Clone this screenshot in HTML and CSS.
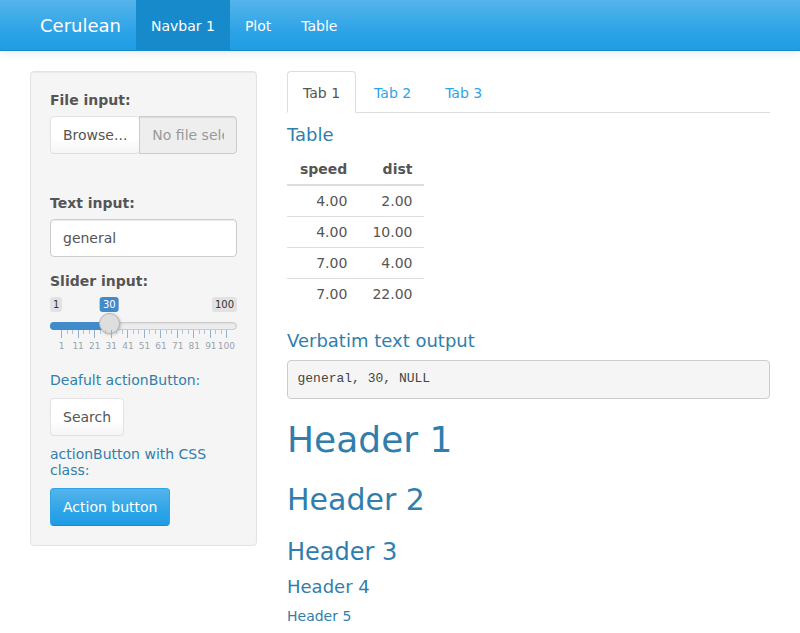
FILE: index.html
```html
<!DOCTYPE html>
<html>
<head>
<meta charset="utf-8">
<title>Cerulean</title>
<link rel="stylesheet" href="styles.css">
</head>
<body>
<nav class="navbar">
  <span class="brand">Cerulean</span>
  <ul class="navlinks">
    <li class="active"><a>Navbar 1</a></li>
    <li><a>Plot</a></li>
    <li><a>Table</a></li>
  </ul>
</nav>
<div class="page">
  <aside class="well">
    <div class="form-group file-group">
      <label class="control-label">File input:</label>
      <div class="input-group">
        <span class="btn btn-default btn-file">Browse...</span>
        <input class="form-control file-name" type="text" placeholder="No file selected" readonly>
      </div>
      <div class="progress-spacer"></div>
    </div>
    <div class="form-group">
      <label class="control-label">Text input:</label>
      <input class="form-control" type="text" value="general">
    </div>
    <div class="form-group">
      <label class="control-label">Slider input:</label>
      <div class="irs">
        <span class="irs-min">1</span>
        <span class="irs-max">100</span>
        <span class="irs-single">30</span>
        <span class="irs-line"></span>
        <span class="irs-bar"></span>
        <span class="irs-handle"></span>
        <div class="irs-grid">
          <div class="ticks">
            <i class="big"></i><i></i><i></i><i class="big"></i><i></i><i></i><i class="big"></i><i></i><i></i><i class="big"></i><i></i><i></i><i class="big"></i><i></i><i></i><i class="big"></i><i></i><i></i><i class="big"></i><i></i><i></i><i class="big"></i><i></i><i></i><i class="big"></i><i></i><i></i><i class="big"></i><i></i><i></i><i class="big"></i>
          </div>
          <div class="grid-labels">
            <span>1</span><span>11</span><span>21</span><span>31</span><span>41</span><span>51</span><span>61</span><span>71</span><span>81</span><span>91</span><span>100</span>
          </div>
        </div>
      </div>
    </div>
    <h5>Deafult actionButton:</h5>
    <button class="btn btn-default">Search</button>
    <h5>actionButton with CSS class:</h5>
    <button class="btn btn-primary">Action button</button>
  </aside>
  <main class="main">
    <ul class="nav-tabs">
      <li class="active"><a>Tab 1</a></li>
      <li><a>Tab 2</a></li>
      <li><a>Tab 3</a></li>
    </ul>
    <h4>Table</h4>
    <table class="shiny-table">
      <thead>
        <tr><th>speed</th><th>dist</th></tr>
      </thead>
      <tbody>
        <tr><td>4.00</td><td>2.00</td></tr>
        <tr><td>4.00</td><td>10.00</td></tr>
        <tr><td>7.00</td><td>4.00</td></tr>
        <tr><td>7.00</td><td>22.00</td></tr>
      </tbody>
    </table>
    <h4>Verbatim text output</h4>
    <pre>general, 30, NULL</pre>
    <h1>Header 1</h1>
    <h2>Header 2</h2>
    <h3>Header 3</h3>
    <h4>Header 4</h4>
    <h5 class="main-h5">Header 5</h5>
  </main>
</div>
</body>
</html>
```
FILE: styles.css
```css
* { box-sizing: border-box; }

body {
  margin: 0;
  font-family: "DejaVu Sans", sans-serif;
  font-size: 14px;
  line-height: 1.428571;
  color: #555;
  background: #fff;
}

/* Navbar */
.navbar {
  display: flex;
  height: 51px;
  padding-left: 25px;
  background-image: linear-gradient(#54b4eb, #2fa4e7 60%, #1d9ce5);
  border-bottom: 1px solid #178acc;
  box-shadow: 0 1px 10px rgba(0, 0, 0, 0.1);
  margin-bottom: 20px;
}
.brand {
  font-size: 18px;
  line-height: 20px;
  padding: 16px 15px 14px;
  color: #fff;
}
.navlinks {
  display: flex;
  list-style: none;
  margin: 0;
  padding: 0;
}
.navlinks a {
  display: block;
  height: 50px;
  padding: 16px 15px 14px;
  line-height: 20px;
  color: #fff;
}
.navlinks .active a {
  background: #178acc;
}

/* Page layout */
.page {
  display: flex;
  align-items: flex-start;
  gap: 30px;
  padding: 0 30px;
}
.well {
  width: 227px;
  flex: none;
  padding: 19px;
  background: #f5f5f5;
  border: 1px solid #e3e3e3;
  border-radius: 4px;
  box-shadow: inset 0 1px 1px rgba(0, 0, 0, 0.05);
}
.main {
  flex: 1;
  min-width: 0;
}

/* Forms */
.form-group { margin-bottom: 15px; }
.control-label {
  display: block;
  font-weight: bold;
  margin-bottom: 5px;
  padding-top: 1px;
  margin-top: -1px;
}
.form-control {
  display: block;
  width: 100%;
  height: 38px;
  padding: 8px 12px;
  font-family: inherit;
  font-size: 14px;
  line-height: 20px;
  color: #555;
  background: #fff;
  border: 1px solid #ccc;
  border-radius: 4px;
  box-shadow: inset 0 1px 1px rgba(0, 0, 0, 0.075);
  outline: none;
}
.input-group { display: flex; }
.btn-file {
  border-radius: 4px 0 0 4px;
  flex: none;
}
.file-name {
  flex: 1;
  min-width: 0;
  background: #eee;
  border-radius: 0 4px 4px 0;
  margin-left: -1px;
}
.file-name::placeholder { color: #999; }
.progress-spacer { height: 25px; }

.btn {
  display: inline-block;
  height: 38px;
  padding: 8px 12px;
  font-family: inherit;
  font-size: 14px;
  line-height: 20px;
  border-radius: 4px;
  border: 1px solid rgba(0, 0, 0, 0.1);
  cursor: pointer;
}
.btn-default {
  color: #555;
  background-image: linear-gradient(#fff, #fff 60%, #f5f5f5);
  border-color: #e3e3e3;
  border-bottom-color: #e0e0e0;
}
.btn-primary {
  color: #fff;
  background-image: linear-gradient(#54b4eb, #2fa4e7 60%, #1d9ce5);
  border-color: #2fa4e7;
  border-bottom-color: #178acc;
}

/* Slider */
.irs {
  position: relative;
  height: 60px;
}
.irs-min, .irs-max, .irs-single {
  position: absolute;
  top: 0;
  font-size: 10px;
  line-height: 1.333;
  padding: 1px 3px;
  border-radius: 3px;
  color: #333;
  background: #e2e2e2;
}
.irs-min { left: 0; }
.irs-max { right: 0; }
.irs-single {
  left: 59.3px;
  transform: translateX(-50%);
  background: #428bca;
  color: #fff;
}
.irs-line {
  position: absolute;
  left: 0;
  right: 0;
  top: 25px;
  height: 8px;
  background: #ededed;
  border: 1px solid #ccc;
  border-radius: 8px;
  box-shadow: inset 0 1px 2px rgba(0, 0, 0, 0.08);
}
.irs-bar {
  position: absolute;
  left: 0;
  top: 25px;
  width: 60px;
  height: 8px;
  background: #428bca;
  border-radius: 8px 0 0 8px;
}
.irs-handle {
  position: absolute;
  left: 49px;
  top: 16px;
  width: 21px;
  height: 21px;
  border-radius: 50%;
  background: #dedede;
  border: 1px solid #b4b4b4;
  box-shadow: 1px 1px 3px rgba(0, 0, 0, 0.2);
}
.irs-grid {
  position: absolute;
  left: 11px;
  top: 33px;
  width: 166px;
  height: 27px;
}
.ticks {
  display: flex;
  justify-content: space-between;
  align-items: flex-start;
}
.ticks i {
  display: block;
  width: 1px;
  height: 4px;
  background: #a9c3dc;
}
.ticks i.big {
  height: 8px;
  background: #8fb2d4;
}
.grid-labels {
  display: flex;
  justify-content: space-between;
  width: 165px;
  margin-top: 3px;
  margin-left: 0.5px;
}
.grid-labels span {
  width: 0;
  display: flex;
  justify-content: center;
  font-size: 9px;
  line-height: 11px;
  color: #9aa4ad;
  white-space: nowrap;
}
.grid-labels span:last-child { margin-left: -1px; }

/* Headings */
h1, h2, h3, h4, h5 {
  color: #317eac;
  font-weight: normal;
  line-height: 1.1;
  font-family: inherit;
}
h1 { font-size: 36px; margin: 20px 0 10px; padding-top: 1px; }
h2 { font-size: 30px; margin: 23px 0 10px; }
h3 { font-size: 24px; margin: 23px 0 10px; }
h4 { font-size: 18px; margin: 10px 0 9px; padding-top: 2px; }
h5 { font-size: 14px; line-height: 16px; margin: 10px 0 10px; }
h5.main-h5 { margin-top: 11px; }

/* Tabs */
.nav-tabs {
  display: flex;
  list-style: none;
  margin: 0;
  padding: 0;
  border-bottom: 1px solid #ddd;
}
.nav-tabs li { margin-right: 2px; margin-bottom: -1px; }
.nav-tabs a {
  display: block;
  padding: 11px 15px 9px;
  line-height: 20px;
  color: #2fa4e7;
  border: 1px solid transparent;
  border-radius: 4px 4px 0 0;
}
.nav-tabs .active a {
  color: #555;
  background: #fff;
  border-color: #ddd;
  border-bottom-color: transparent;
}

/* Table */
.shiny-table {
  border-collapse: collapse;
  border-spacing: 0;
  margin-bottom: 20px;
}
.shiny-table th, .shiny-table td {
  padding: 5px 12px 5px 13px;
  line-height: 20px;
  text-align: right;
}
.shiny-table th {
  font-weight: bold;
  border-bottom: 2px solid #ddd;
}
.shiny-table td { border-top: 1px solid #ddd; }

/* Verbatim */
pre {
  margin: 0 0 10px;
  padding: 9.5px;
  font-family: "Liberation Mono", monospace;
  font-size: 13px;
  line-height: 1.428571;
  color: #444;
  background: #f5f5f5;
  border: 1px solid #ccc;
  border-radius: 4px;
}
```
